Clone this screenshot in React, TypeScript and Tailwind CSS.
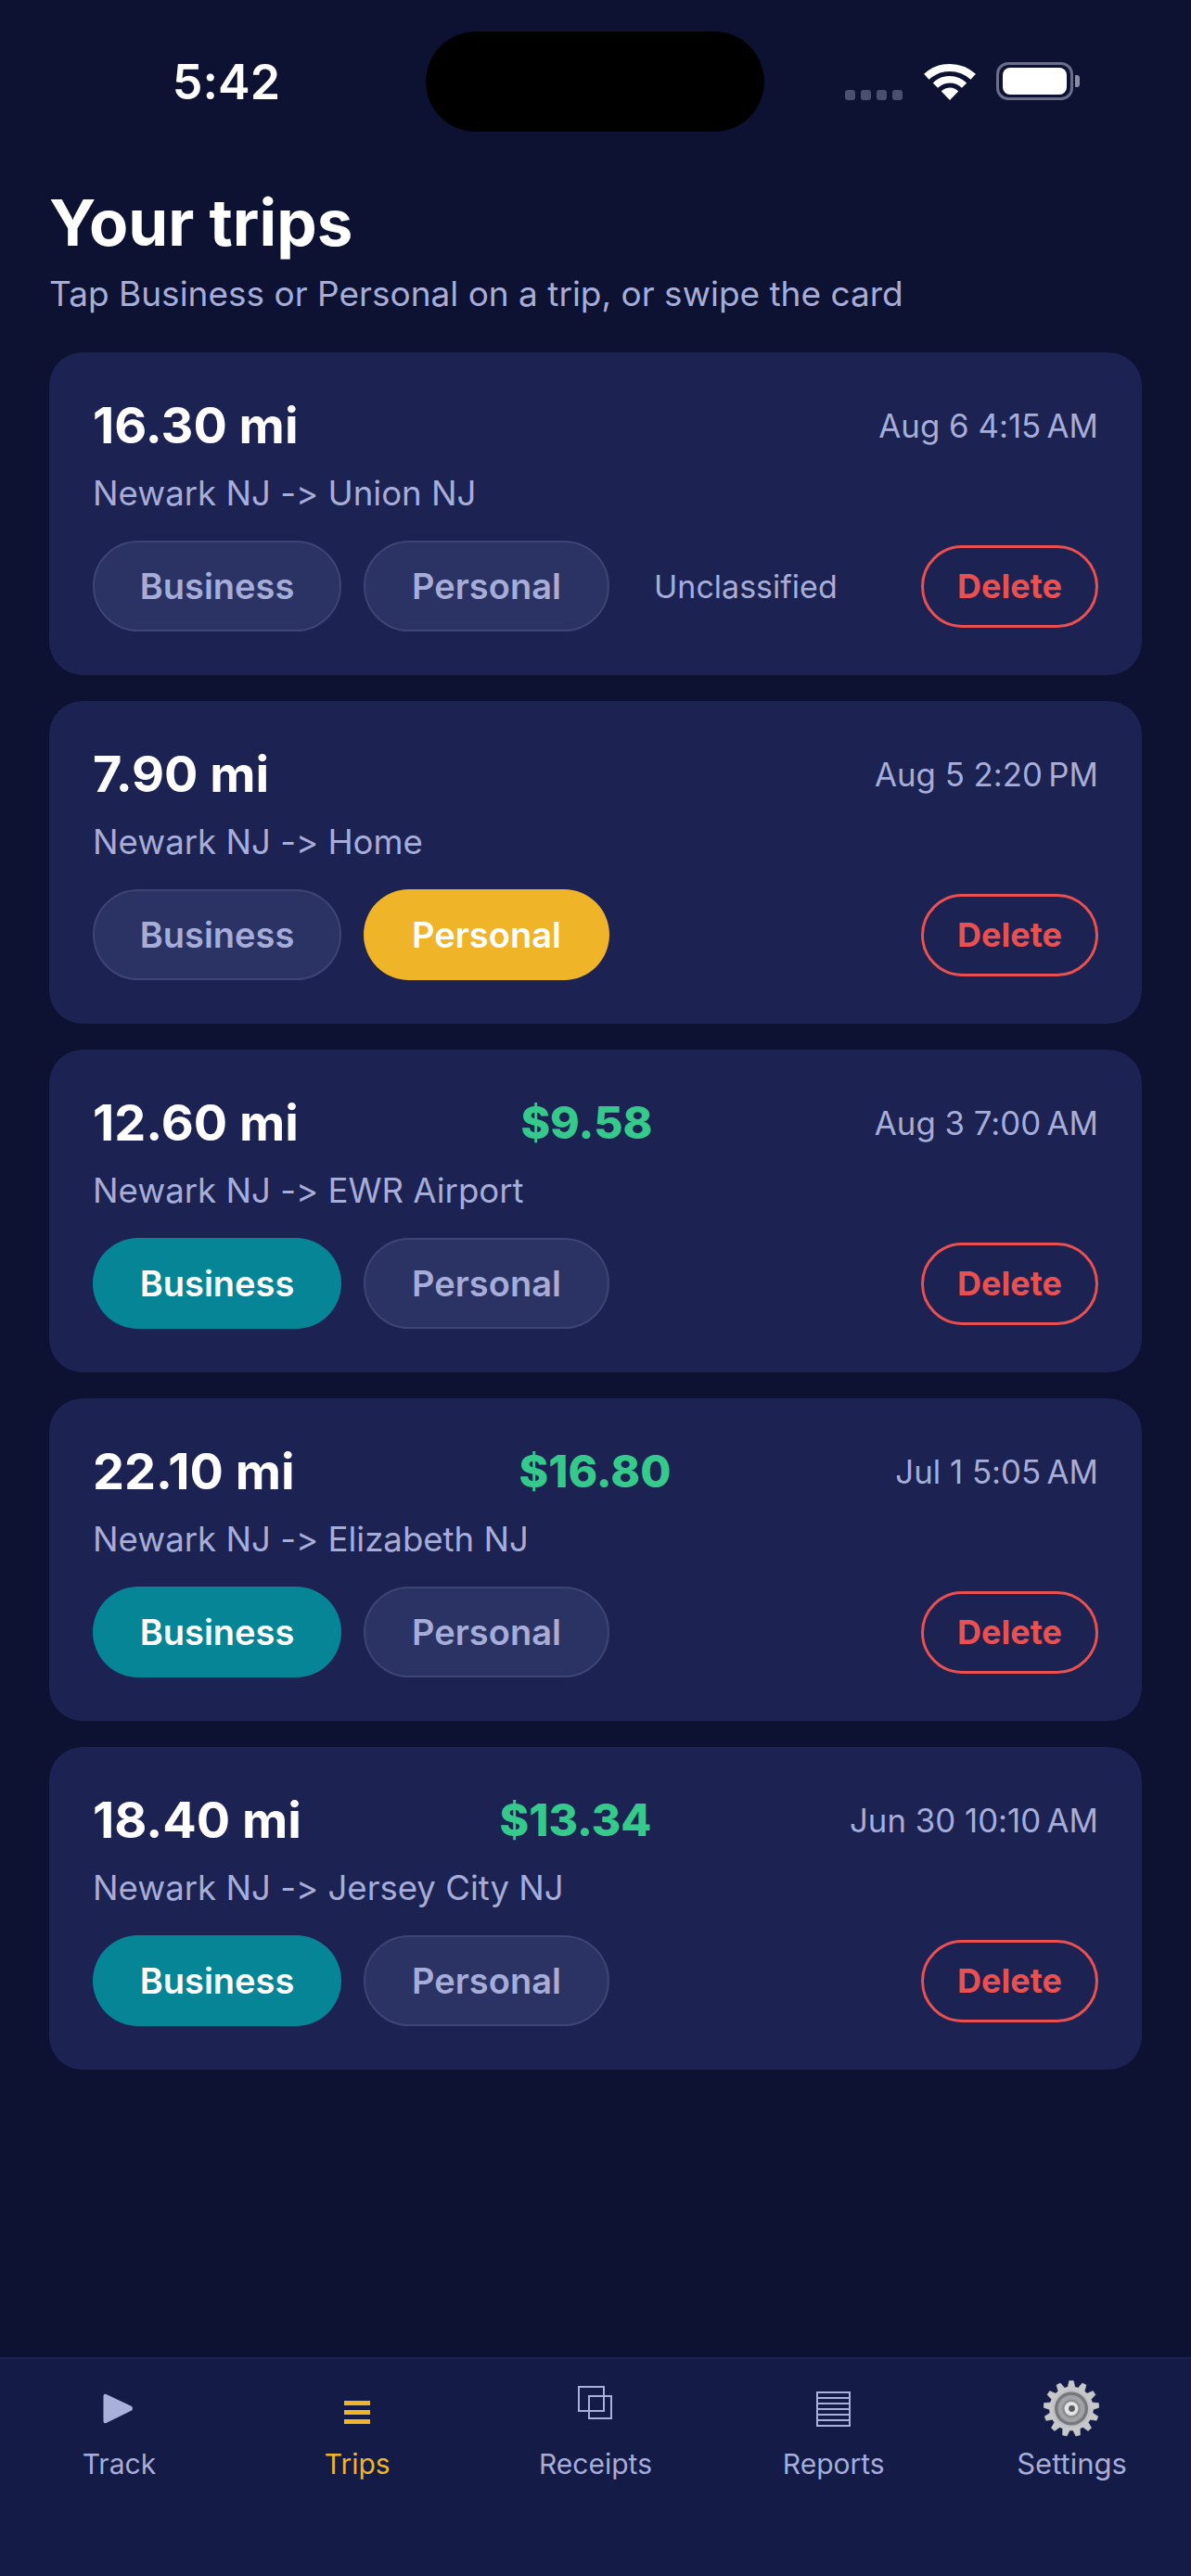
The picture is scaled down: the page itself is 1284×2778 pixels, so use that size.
import { useMemo } from "react"

type Kind = "business" | "personal" | null

interface Trip {
  miles: string
  amount?: string
  date: string
  route: string
  kind: Kind
}

const trips: Trip[] = [
  { miles: "16.30 mi", date: "Aug 6 4:15\u202fAM", route: "Newark NJ -> Union NJ", kind: null },
  { miles: "7.90 mi", date: "Aug 5 2:20\u202fPM", route: "Newark NJ -> Home", kind: "personal" },
  { miles: "12.60 mi", amount: "$9.58", date: "Aug 3 7:00\u202fAM", route: "Newark NJ -> EWR Airport", kind: "business" },
  { miles: "22.10 mi", amount: "$16.80", date: "Jul 1 5:05\u202fAM", route: "Newark NJ -> Elizabeth NJ", kind: "business" },
  { miles: "18.40 mi", amount: "$13.34", date: "Jun 30 10:10\u202fAM", route: "Newark NJ -> Jersey City NJ", kind: "business" },
]

function StatusBar() {
  return (
    <div className="flex h-[142px] items-start pt-[34px]">
      <div className="flex h-[108px] w-[459px] items-center justify-center pl-[29px] pt-[2px]">
        <span className="text-[52px] font-semibold leading-none text-white">5:42</span>
      </div>
      <div className="h-[108px] w-[365px] rounded-[54px] bg-black" />
      <div className="flex h-[108px] flex-1 items-start pl-[87px] pt-[33px]">
        <div className="mt-[30px] flex gap-[6px]">
          <span className="h-[11px] w-[11px] rounded-[3px] bg-[#4a4f70]" />
          <span className="h-[11px] w-[11px] rounded-[3px] bg-[#4a4f70]" />
          <span className="h-[11px] w-[11px] rounded-[3px] bg-[#4a4f70]" />
          <span className="h-[11px] w-[11px] rounded-[3px] bg-[#4a4f70]" />
        </div>
        <svg className="ml-[23px]" width="56" height="41" viewBox="0 0 56 41" fill="none">
          <path d="M2.8 15.8 A37 37 0 0 1 53.2 15.8" stroke="white" strokeWidth="8" />
          <path d="M12.4 25.2 A22 22 0 0 1 43.6 25.2" stroke="white" strokeWidth="7.5" />
          <path d="M28 41 L18.8 31.4 A13 13 0 0 1 37.2 31.4 Z" fill="white" />
        </svg>
        <div className="ml-[22px] flex items-center">
          <div className="flex h-[41px] w-[83px] items-center justify-center rounded-[13px] border-[3px] border-[#6a6e8a]">
            <div className="h-[29px] w-[69px] rounded-[8px] bg-white" />
          </div>
          <div className="ml-[2px] h-[13px] w-[5px] rounded-r-[3px] bg-[#8a8da3]" />
        </div>
      </div>
    </div>
  )
}

function Pill({ label, width, active }: { label: string; width: string; active: string | null }) {
  if (active) {
    return (
      <button className={`flex h-[98px] items-center justify-center rounded-full text-[38px] font-semibold text-white ${width} ${active}`}>
        {label}
      </button>
    )
  }
  return (
    <button className={`flex h-[98px] items-center justify-center rounded-full border-2 border-[#3e4573] bg-[#2b3365] text-[38px] font-semibold text-[#a5add8] ${width}`}>
      {label}
    </button>
  )
}

function TripCard({ trip }: { trip: Trip }) {
  return (
    <div className="flex h-[348px] flex-col rounded-[36px] bg-[#1c2251] px-[47px] pt-[48px]">
      <div className="flex items-center justify-between">
        <span className="text-[54px] font-bold leading-[62px] text-white">{trip.miles}</span>
        {trip.amount && (
          <span className="text-[48px] font-extrabold leading-[62px] text-[#35c98b]">{trip.amount}</span>
        )}
        <span className="text-[34.8px] leading-[62px] text-[#a5add8]">{trip.date}</span>
      </div>
      <div className="mt-[20px] text-[36.6px] leading-[44px] text-[#a5add8]">{trip.route}</div>
      <div className="mt-[29px] flex items-center gap-[24px]">
        <Pill label="Business" width="w-[268px]" active={trip.kind === "business" ? "bg-[#068596]" : null} />
        <Pill label="Personal" width="w-[265px]" active={trip.kind === "personal" ? "bg-[#f0b429]" : null} />
        {trip.kind === null && (
          <span className="ml-[24px] text-[34px] text-[#a5add8]">Unclassified</span>
        )}
        <button className="ml-auto flex h-[89px] w-[191px] items-center justify-center rounded-full border-[3px] border-[#e9504f] text-[36px] font-bold text-[#e9504f]">
          Delete
        </button>
      </div>
    </div>
  )
}

function GearIcon() {
  const teeth = useMemo(() => {
    const pts: string[] = []
    const n = 13
    for (let i = 0; i < n; i++) {
      const a = (i / n) * Math.PI * 2 - Math.PI / 2
      const w = (Math.PI / n) * 0.5
      const p = (r: number, t: number) =>
        `${(30 + r * Math.cos(t)).toFixed(2)},${(30 + r * Math.sin(t)).toFixed(2)}`
      pts.push(p(23.5, a - w * 1.35), p(30, a - w * 0.65), p(30, a + w * 0.65), p(23.5, a + w * 1.35))
    }
    return pts.join(" ")
  }, [])
  return (
    <svg className="mb-[2px] mr-[2px]" width="60" height="61" viewBox="0 0 60 60">
      <polygon points={teeth} fill="#c6c8ca" stroke="#c6c8ca" strokeWidth="0.6" strokeLinejoin="round" />
      <circle cx="30" cy="30" r="20.5" fill="#bfc1c3" />
      <circle cx="30" cy="30" r="18" fill="#77797e" />
      <circle cx="30" cy="30" r="14.5" fill="#a2a3a6" />
      <circle cx="30" cy="30" r="10" fill="#8b8c90" />
      <circle cx="30" cy="30" r="7.5" fill="#e2e3e5" />
      <circle cx="30.5" cy="30" r="3.4" fill="#5a5a5c" />
    </svg>
  )
}

function TabBar() {
  const label = "text-[30px] leading-[38px] text-[#a5add8]"
  return (
    <nav className="grid h-[236px] grid-cols-5 border-t-2 border-[#1a2152] bg-[#141b47]">
      <div className="flex flex-col items-center">
        <div className="flex h-[86px] items-end justify-center">
          <svg className="mb-[16px] mr-[1px]" width="33" height="33" viewBox="0 0 33 33">
            <path d="M3.5 1 L31 14 Q33 16.5 31 18.5 L3.5 32 Q0.5 33 0.5 30 L0.5 3 Q0.5 0 3.5 1 Z" fill="#a9b1da" />
          </svg>
        </div>
        <span className={`mt-[8px] ${label}`}>Track</span>
      </div>
      <div className="flex flex-col items-center">
        <div className="flex h-[86px] flex-col items-center justify-end gap-[5px] pb-[16px]">
          <span className="h-[5px] w-[28px] bg-[#f0b429]" />
          <span className="h-[5px] w-[28px] bg-[#f0b429]" />
          <span className="h-[5px] w-[28px] bg-[#f0b429]" />
        </div>
        <span className="mt-[8px] text-[30px] leading-[38px] text-[#f0b429]">Trips</span>
      </div>
      <div className="flex flex-col items-center">
        <div className="flex h-[86px] items-end justify-center">
          <svg className="mb-[21px]" width="37" height="36" viewBox="0 0 37 36" fill="none" stroke="#a9b1da" strokeWidth="2">
            <rect x="1" y="1" width="27" height="26" />
            <rect x="12" y="11" width="24" height="24" />
          </svg>
        </div>
        <span className={`mt-[8px] ${label}`}>Receipts</span>
      </div>
      <div className="flex flex-col items-center">
        <div className="flex h-[86px] items-end justify-center">
          <svg className="mb-[13px]" width="37" height="38" viewBox="0 0 37 38" fill="none" stroke="#a9b1da" strokeWidth="2">
            <rect x="1" y="1" width="35" height="36" />
            <path d="M1 7 H36 M1 13 H36 M1 19 H36 M1 25 H36 M1 31 H36" />
          </svg>
        </div>
        <span className={`mt-[8px] ${label}`}>Reports</span>
      </div>
      <div className="flex flex-col items-center">
        <div className="flex h-[86px] items-end justify-center">
          <GearIcon />
        </div>
        <span className="mt-[8px] text-[31px] leading-[38px] text-[#a5add8]">Settings</span>
      </div>
    </nav>
  )
}

export default function App() {
  return (
    <div className="flex h-[2778px] w-[1284px] flex-col overflow-hidden bg-[#0d1233] font-['Inter',sans-serif] [font-feature-settings:'calt'_0]">
      <StatusBar />
      <main className="flex-1 px-[53px] pt-[58px]">
        <h1 className="text-[69px] font-bold leading-[80px] text-white">Your trips</h1>
        <p className="mt-[14px] text-[37px] leading-[46px] text-[#a5add8]">
          Tap Business or Personal on a trip, or swipe the card
        </p>
        <div className="mt-[40px] flex flex-col gap-[28px]">
          {trips.map((trip) => (
            <TripCard key={trip.route} trip={trip} />
          ))}
        </div>
      </main>
      <TabBar />
    </div>
  )
}
